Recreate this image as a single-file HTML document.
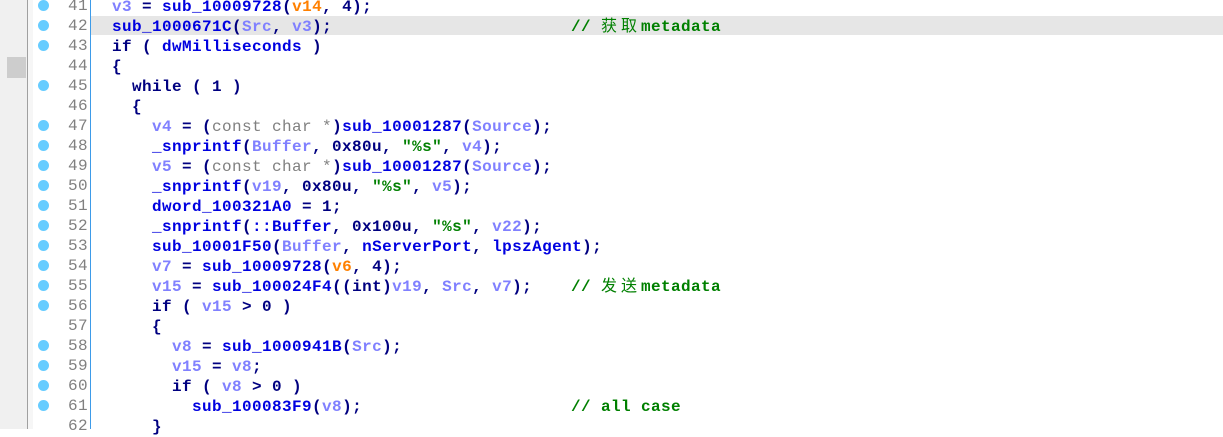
<html><head><style>
body{margin:0;width:1223px;height:429px;overflow:hidden;background:#fff;position:relative;font-family:"Liberation Mono","Noto Sans CJK SC",monospace;}
.l{position:absolute;left:0;width:1223px;height:20px;}
.n{position:absolute;right:1135px;top:1px;line-height:20px;font-size:16px;color:#808080;letter-spacing:0.4px;}
.d{position:absolute;left:38px;top:5px;width:11px;height:11px;border-radius:50%;background:#66ccff;}
.c{position:absolute;top:2px;line-height:20px;font-size:16px;font-weight:bold;letter-spacing:0.4px;color:#000080;white-space:pre;}
.cm{position:absolute;left:571px;top:2px;line-height:20px;font-size:16px;font-weight:bold;letter-spacing:0.4px;color:#008000;white-space:pre;}
.cm .z{font-weight:normal;letter-spacing:4px;font-size:16px;}
.f{color:#0000e0}.v{color:#8080ff}.o{color:#ff8000}.g{color:#808080;font-weight:normal}.s{color:#008000}
</style></head><body>
<div style="position:absolute;left:0;top:0;width:27px;height:429px;background:#f0f0f0"></div>
<div style="position:absolute;left:7px;top:57px;width:19px;height:21px;background:#cdcdcd"></div>
<div style="position:absolute;left:27px;top:0;width:1px;height:429px;background:#a0a0a0"></div>
<div style="position:absolute;left:28px;top:0;width:5px;height:429px;background:#f6f6f6"></div>
<div style="position:absolute;left:90px;top:0;width:1px;height:429px;background:#3d9be9"></div>
<div style="position:absolute;left:91px;top:16px;width:1132px;height:19px;background:#e6e6e6"></div>

<div class="l" style="top:-5px"><i class="d"></i><span class="n">41</span><span class="c" style="left:112px"><span class="v">v3</span> = <span class="f">sub_10009728</span>(<span class="o">v14</span>, 4);</span></div>
<div class="l" style="top:15px"><i class="d"></i><span class="n">42</span><span class="c" style="left:112px"><span class="f">sub_1000671C</span>(<span class="v">Src</span>, <span class="v">v3</span>);</span><span class="cm">// <span class="z">获取</span>metadata</span></div>
<div class="l" style="top:35px"><i class="d"></i><span class="n">43</span><span class="c" style="left:112px">if ( <span class="f">dwMilliseconds</span> )</span></div>
<div class="l" style="top:55px"><span class="n">44</span><span class="c" style="left:112px">{</span></div>
<div class="l" style="top:75px"><i class="d"></i><span class="n">45</span><span class="c" style="left:132px">while ( 1 )</span></div>
<div class="l" style="top:95px"><span class="n">46</span><span class="c" style="left:132px">{</span></div>
<div class="l" style="top:115px"><i class="d"></i><span class="n">47</span><span class="c" style="left:152px"><span class="v">v4</span> = (<span class="g">const char *</span>)<span class="f">sub_10001287</span>(<span class="v">Source</span>);</span></div>
<div class="l" style="top:135px"><i class="d"></i><span class="n">48</span><span class="c" style="left:152px"><span class="f">_snprintf</span>(<span class="v">Buffer</span>, 0x80u, <span class="s">"%s"</span>, <span class="v">v4</span>);</span></div>
<div class="l" style="top:155px"><i class="d"></i><span class="n">49</span><span class="c" style="left:152px"><span class="v">v5</span> = (<span class="g">const char *</span>)<span class="f">sub_10001287</span>(<span class="v">Source</span>);</span></div>
<div class="l" style="top:175px"><i class="d"></i><span class="n">50</span><span class="c" style="left:152px"><span class="f">_snprintf</span>(<span class="v">v19</span>, 0x80u, <span class="s">"%s"</span>, <span class="v">v5</span>);</span></div>
<div class="l" style="top:195px"><i class="d"></i><span class="n">51</span><span class="c" style="left:152px"><span class="f">dword_100321A0</span> = 1;</span></div>
<div class="l" style="top:215px"><i class="d"></i><span class="n">52</span><span class="c" style="left:152px"><span class="f">_snprintf</span>(<span class="f">::Buffer</span>, 0x100u, <span class="s">"%s"</span>, <span class="v">v22</span>);</span></div>
<div class="l" style="top:235px"><i class="d"></i><span class="n">53</span><span class="c" style="left:152px"><span class="f">sub_10001F50</span>(<span class="v">Buffer</span>, <span class="f">nServerPort</span>, <span class="f">lpszAgent</span>);</span></div>
<div class="l" style="top:255px"><i class="d"></i><span class="n">54</span><span class="c" style="left:152px"><span class="v">v7</span> = <span class="f">sub_10009728</span>(<span class="o">v6</span>, 4);</span></div>
<div class="l" style="top:275px"><i class="d"></i><span class="n">55</span><span class="c" style="left:152px"><span class="v">v15</span> = <span class="f">sub_100024F4</span>((int)<span class="v">v19</span>, <span class="v">Src</span>, <span class="v">v7</span>);</span><span class="cm">// <span class="z">发送</span>metadata</span></div>
<div class="l" style="top:295px"><i class="d"></i><span class="n">56</span><span class="c" style="left:152px">if ( <span class="v">v15</span> &gt; 0 )</span></div>
<div class="l" style="top:315px"><span class="n">57</span><span class="c" style="left:152px">{</span></div>
<div class="l" style="top:335px"><i class="d"></i><span class="n">58</span><span class="c" style="left:172px"><span class="v">v8</span> = <span class="f">sub_1000941B</span>(<span class="v">Src</span>);</span></div>
<div class="l" style="top:355px"><i class="d"></i><span class="n">59</span><span class="c" style="left:172px"><span class="v">v15</span> = <span class="v">v8</span>;</span></div>
<div class="l" style="top:375px"><i class="d"></i><span class="n">60</span><span class="c" style="left:172px">if ( <span class="v">v8</span> &gt; 0 )</span></div>
<div class="l" style="top:395px"><i class="d"></i><span class="n">61</span><span class="c" style="left:192px"><span class="f">sub_100083F9</span>(<span class="v">v8</span>);</span><span class="cm">// all case</span></div>
<div class="l" style="top:415px"><span class="n">62</span><span class="c" style="left:152px">}</span></div>
</body></html>
